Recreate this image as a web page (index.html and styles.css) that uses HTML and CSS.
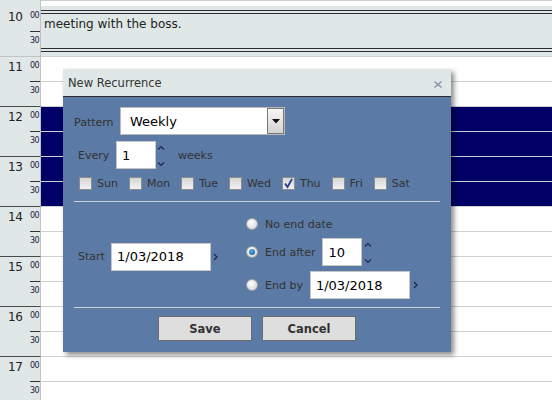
FILE: index.html
```html
<!DOCTYPE html>
<html>
<head>
<meta charset="utf-8">
<title>New Recurrence</title>
<link rel="stylesheet" href="styles.css">
</head>
<body>
<div class="cal">
  <div class="strip"><div class="lab"></div><div class="main"></div></div>

  <div class="hour">
    <div class="lab none"><span class="hnum">10</span><span class="mins"><span class="m00">00</span><span class="m30">30</span></span></div>
    <div class="main appt"><span class="appt-text">meeting with the boss.</span></div>
  </div>
  <div class="hour">
    <div class="lab soft"><span class="hnum">11</span><span class="mins"><span class="m00">00</span><span class="m30">30</span></span></div>
    <div class="main"><div class="slot"></div><div class="slot"></div></div>
  </div>
  <div class="hour">
    <div class="lab"><span class="hnum">12</span><span class="mins"><span class="m00">00</span><span class="m30">30</span></span></div>
    <div class="main sel"><div class="slot"></div><div class="slot"></div></div>
  </div>
  <div class="hour">
    <div class="lab"><span class="hnum">13</span><span class="mins"><span class="m00">00</span><span class="m30">30</span></span></div>
    <div class="main sel"><div class="slot"></div><div class="slot"></div></div>
  </div>
  <div class="hour">
    <div class="lab"><span class="hnum">14</span><span class="mins"><span class="m00">00</span><span class="m30">30</span></span></div>
    <div class="main"><div class="slot"></div><div class="slot"></div></div>
  </div>
  <div class="hour">
    <div class="lab"><span class="hnum">15</span><span class="mins"><span class="m00">00</span><span class="m30">30</span></span></div>
    <div class="main"><div class="slot"></div><div class="slot"></div></div>
  </div>
  <div class="hour">
    <div class="lab"><span class="hnum">16</span><span class="mins"><span class="m00">00</span><span class="m30">30</span></span></div>
    <div class="main"><div class="slot"></div><div class="slot"></div></div>
  </div>
  <div class="hour">
    <div class="lab"><span class="hnum">17</span><span class="mins"><span class="m00">00</span><span class="m30">30</span></span></div>
    <div class="main"><div class="slot"></div><div class="slot"></div></div>
  </div>
</div>

<div class="dlg">
  <div class="dlg-head">
    <span class="title">New Recurrence</span>
    <svg class="close" width="8" height="7" viewBox="0 0 8 7"><path d="M0.5 0.5 L7.5 6.5 M7.5 0.5 L0.5 6.5" stroke="#7d8a9c" stroke-width="1.1" fill="none"/></svg>
  </div>
  <div class="dlg-body">
    <div class="row r-pattern">
      <span class="lbl-pattern">Pattern</span>
      <div class="select">
        <span class="val">Weekly</span>
        <span class="sbtn"><svg width="8" height="5" viewBox="0 0 8 5"><path d="M0 0 H8 L4 4.5 Z" fill="#111"/></svg></span>
      </div>
    </div>
    <div class="row r-every">
      <span class="lbl-every">Every</span>
      <div class="inp num">1</div>
      <svg class="spin" width="8" height="28" viewBox="0 0 8 28"><path d="M1 8.5 L4 5.5 L7 8.5 M1 21.5 L4 24.5 L7 21.5" stroke="#1c2548" stroke-width="1.2" fill="none"/></svg>
      <span class="weeks">weeks</span>
    </div>
    <div class="row r-days">
      <span class="day"><span class="cb"></span>Sun</span>
      <span class="day"><span class="cb"></span>Mon</span>
      <span class="day"><span class="cb"></span>Tue</span>
      <span class="day"><span class="cb"></span>Wed</span>
      <span class="day"><span class="cb on"><svg width="11" height="11" viewBox="0 0 11 11"><path d="M2 5.5 L4.5 9 L9 1" stroke="#2a3f8f" stroke-width="1.8" fill="none"/></svg></span>Thu</span>
      <span class="day"><span class="cb"></span>Fri</span>
      <span class="day"><span class="cb"></span>Sat</span>
    </div>
    <div class="sep first"></div>
    <div class="range">
      <div class="start">
        <span class="lbl-start">Start</span>
        <div class="inp date">1/03/2018</div>
        <svg class="chev" width="5" height="8" viewBox="0 0 5 8"><path d="M1 1 L4 4 L1 7" stroke="#1c2548" stroke-width="1.2" fill="none"/></svg>
      </div>
      <div class="ends">
        <div class="end-row ra"><span class="radio"></span><span class="rtxt">No end date</span></div>
        <div class="end-row rb"><span class="radio on"></span><span class="rtxt">End after</span><div class="inp num">10</div>
          <svg class="spin" width="8" height="28" viewBox="0 0 8 28"><path d="M1 8.5 L4 5.5 L7 8.5 M1 21.5 L4 24.5 L7 21.5" stroke="#1c2548" stroke-width="1.2" fill="none"/></svg></div>
        <div class="end-row rc"><span class="radio"></span><span class="rtxt">End by</span><div class="inp date">1/03/2018</div>
          <svg class="chev" width="5" height="8" viewBox="0 0 5 8"><path d="M1 1 L4 4 L1 7" stroke="#1c2548" stroke-width="1.2" fill="none"/></svg></div>
      </div>
    </div>
    <div class="sep"></div>
    <div class="buttons">
      <button class="btn">Save</button>
      <button class="btn">Cancel</button>
    </div>
  </div>
</div>
</body>
</html>
```
FILE: styles.css
```css
* { box-sizing: border-box; }
body {
  margin: 0;
  width: 552px;
  height: 400px;
  overflow: hidden;
  position: relative;
  background: #fff;
  font-family: "DejaVu Sans", Verdana, sans-serif;
  color: #333;
}

/* calendar */
.cal { display: flex; flex-direction: column; }
.strip { display: flex; height: 6px; }
.strip .main { border-top: 1px solid #cfcfcf; }
.hour { display: flex; height: 50px; flex: none; }
.lab {
  width: 41px;
  flex: none;
  background: #dfe7e7;
  border-right: 1px solid #c2c2c2;
  display: flex;
}
.hour .lab { border-top: 1px solid #4a4a4a; }
.hour .lab.soft { border-top-color: #c4c4c4; }
.hour .lab.none { border-top-color: #dfe7e7; }
.hnum {
  width: 30px;
  padding: 5px 0 0 8px;
  font-size: 12px;
  line-height: 11px;
  letter-spacing: -0.4px;
  color: #222;
}
.mins { width: 10px; display: flex; flex-direction: column; }
.m00, .m30 {
  font-size: 8px;
  line-height: 7px;
  letter-spacing: -0.6px;
  color: #1e2040;
  padding-top: 5px;
}
.m00 { height: 24px; }
.m30 { height: 25px; border-top: 1px solid #333; }

.main { flex: 1; display: flex; flex-direction: column; border-top: 1px solid #cfcfcf; }
.slot { height: 24px; }
.slot + .slot { height: 25px; border-top: 1px solid #cfcfcf; }
.main.sel { background: #000066; }
.main.appt {
  border-top: none;
  background:
    linear-gradient(#2d2d2d, #2d2d2d) 0 4px / 100% 1px no-repeat,
    linear-gradient(#2d2d2d, #2d2d2d) 0 7px / 100% 1px no-repeat,
    linear-gradient(#2d2d2d, #2d2d2d) 0 42px / 100% 1px no-repeat,
    linear-gradient(#2d2d2d, #2d2d2d) 0 45px / 100% 1px no-repeat,
    #dfe7e7;
  padding: 11px 0 0 3px;
}
.appt-text { font-size: 12px; line-height: 14px; color: #222; }

/* dialog */
.dlg {
  position: absolute;
  left: 63px;
  top: 69px;
  width: 388px;
  box-shadow: 3px 3px 5px rgba(0, 0, 0, 0.45);
}
.dlg-head {
  height: 28px;
  background: #dfe7e7;
  border-bottom: 1px solid #2b2b2b;
  display: flex;
  align-items: center;
  justify-content: space-between;
  padding: 0 9px 0 5px;
}
.title { font-size: 11.5px; color: #333; }
.close { margin-top: 3px; }

.dlg-body {
  background: #5b7aa5;
  padding: 10px 11px 11px;
  font-size: 11px;
  color: #333;
}
.row { display: flex; align-items: center; }
.r-pattern { height: 28px; }
.lbl-pattern { width: 46px; padding-top: 2px; }
.select {
  width: 165px;
  height: 28px;
  border: 1px solid #b8b8b8;
  background: #fff;
  display: flex;
}
.select .val {
  flex: 1;
  display: flex;
  align-items: center;
  padding-left: 9px;
  font-size: 13px;
  color: #000;
}
.sbtn {
  width: 17px;
  border: 1px solid #777;
  background: linear-gradient(#f6f6f6, #d3d3d3);
  display: flex;
  align-items: center;
  justify-content: center;
}

.r-every { height: 28px; margin-top: 6px; }
.lbl-every { width: 42px; padding-left: 4px; }
.inp {
  height: 28px;
  background: #fff;
  border: 1px solid #c6c6c6;
  color: #000;
  font-size: 13px;
  display: flex;
  align-items: center;
  padding-left: 5px;
}
.inp.num { width: 40px; }
.inp.date { width: 100px; }
.spin { margin-left: 1px; flex: none; }
.weeks { margin-left: 13px; }

.r-days { height: 13px; margin-top: 8px; padding-left: 5px; }
.day { display: flex; align-items: center; margin-right: 11px; }
.cb {
  width: 13px;
  height: 13px;
  border: 1px solid #8c8c8c;
  background: linear-gradient(#d6d6d6, #f2f2f2);
  margin-right: 5px;
  display: flex;
  align-items: center;
  justify-content: center;
}

.sep { height: 1px; background: #c9cfdc; }
.sep.first { margin-top: 11px; }

.range { display: flex; align-items: center; padding: 12px 0 8px; }
.start { width: 172px; display: flex; align-items: center; }
.lbl-start { width: 37px; padding-left: 4px; }
.chev { margin-left: 2px; flex: none; }
.ends { display: flex; flex-direction: column; }
.end-row { display: flex; align-items: center; }
.ra { height: 20px; }
.rb { height: 28px; margin-top: 4px; }
.rc { height: 28px; margin-top: 5px; }
.rb .spin { margin-left: 2px; }
.rc .chev { margin-left: 3px; }
.rtxt { margin: 0 7px; }
.radio {
  width: 12px;
  height: 12px;
  border-radius: 50%;
  border: 1px solid #a3a3a3;
  background: radial-gradient(circle at 40% 35%, #ffffff, #cfcfcf);
  display: flex;
  align-items: center;
  justify-content: center;
  flex: none;
}
.radio.on::after {
  content: "";
  width: 6px;
  height: 6px;
  border-radius: 50%;
  background: radial-gradient(circle at 40% 35%, #5fb0f0, #0b4d96);
}

.buttons { display: flex; justify-content: center; gap: 10px; margin-top: 8px; }
.btn {
  width: 94px;
  height: 25px;
  background: #dedede;
  border: 1px solid #6c6c6c;
  font-family: "DejaVu Sans", Verdana, sans-serif;
  font-weight: bold;
  font-size: 11.5px;
  color: #333;
  padding: 0;
}
```
